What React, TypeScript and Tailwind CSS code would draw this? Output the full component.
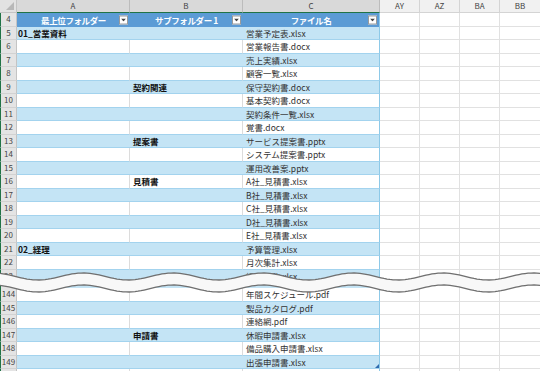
import React from "react";

type R = { n: number; a?: string; b?: string; c?: string; hideNum?: boolean };

const top: R[] = [
  { n: 5, a: "01_営業資料", c: "営業予定表.xlsx" },
  { n: 6, c: "営業報告書.docx" },
  { n: 7, c: "売上実績.xlsx" },
  { n: 8, c: "顧客一覧.xlsx" },
  { n: 9, b: "契約関連", c: "保守契約書.docx" },
  { n: 10, c: "基本契約書.docx" },
  { n: 11, c: "契約条件一覧.xlsx" },
  { n: 12, c: "覚書.docx" },
  { n: 13, b: "提案書", c: "サービス提案書.pptx" },
  { n: 14, c: "システム提案書.pptx" },
  { n: 15, c: "運用改善案.pptx" },
  { n: 16, b: "見積書", c: "A社_見積書.xlsx" },
  { n: 17, c: "B社_見積書.xlsx" },
  { n: 18, c: "C社_見積書.xlsx" },
  { n: 19, c: "D社_見積書.xlsx" },
  { n: 20, c: "E社_見積書.xlsx" },
  { n: 21, a: "02_経理", c: "予算管理.xlsx" },
  { n: 22, c: "月次集計.xlsx" },
];

const bottom: R[] = [
  { n: 144, c: "年間スケジュール.pdf" },
  { n: 145, c: "製品カタログ.pdf" },
  { n: 146, c: "連絡網.pdf" },
  { n: 147, b: "申請書", c: "休暇申請書.xlsx" },
  { n: 148, c: "備品購入申請書.xlsx" },
  { n: 149, c: "出張申請書.xlsx" },
];

function ExtCells() {
  return (
    <>
      <div className="w-[40px] shrink-0 border-r border-b border-[#e1e1e1]" />
      <div className="w-[40px] shrink-0 border-r border-b border-[#e1e1e1]" />
      <div className="w-[40px] shrink-0 border-r border-b border-[#e1e1e1]" />
      <div className="w-[40px] shrink-0 border-b border-[#e1e1e1]" />
    </>
  );
}

function DataRow({ n, a, b, c, hideNum }: R) {
  const blue = n % 2 === 1;
  const cellBase = "shrink-0 border-b border-[#a3d3ee] flex items-center overflow-hidden whitespace-nowrap text-[8.5px] leading-none";
  const fill = blue ? "bg-[#c4e4f5]" : "bg-white";
  return (
    <div className="flex h-[13.5px]">
      <div className="w-[17px] shrink-0 bg-[#e4e4e4] border-l border-l-[#217346] border-r border-r-[#c4c4c4] border-b border-b-[#d2d2d2] flex items-center justify-center text-[8px] leading-none text-[#444]">
        {hideNum ? "" : n}
      </div>
      <div className={`w-[113px] pl-[1px] font-bold text-[#111] ${cellBase} ${fill} ${blue ? "" : "border-r border-r-[#dcdcdc]"}`}>{a}</div>
      <div className={`w-[113px] pl-[3px] font-bold text-[#111] ${cellBase} ${fill} ${blue ? "" : "border-r border-r-[#dcdcdc]"}`}>{b}</div>
      <div className={`w-[137px] pl-[3px] text-[#333] border-r border-r-[#8dc9e8] ${cellBase} ${fill}`}>{c}</div>
      <ExtCells />
    </div>
  );
}

function FilterBtn() {
  return (
    <div className="absolute right-[2px] top-1/2 -translate-y-1/2 w-[9px] h-[9px] bg-white border border-[#9a9a9a] flex items-center justify-center">
      <svg width="5" height="3" viewBox="0 0 5 3">
        <path d="M0 0 L5 0 L2.5 3 Z" fill="#444" />
      </svg>
    </div>
  );
}

function wavePath(cy: number) {
  const pts: string[] = [];
  for (let x = 0; x <= 540; x += 3) {
    const y = cy - 3.5 * Math.cos((2 * Math.PI * (x - 83)) / 90);
    pts.push(`${x} ${y.toFixed(2)}`);
  }
  return pts;
}

function Wave() {
  const t = wavePath(8.5);
  const b = wavePath(20.5);
  const fillD = `M${t.join(" L")} L${[...b].reverse().join(" L")} Z`;
  return (
    <svg className="absolute left-0 top-[268px]" width="540" height="28" viewBox="0 0 540 28">
      <path d={fillD} fill="#f8f8f8" />
      <path d={`M${t.join(" L")}`} fill="none" stroke="#6f6f6f" strokeWidth="1.3" />
      <path d={`M${b.join(" L")}`} fill="none" stroke="#6f6f6f" strokeWidth="1.3" />
    </svg>
  );
}

export default function App() {
  const colHdr = "shrink-0 flex items-center justify-center text-[8px] leading-none text-[#444]";
  return (
    <div className="relative w-[540px] h-[371px] overflow-hidden bg-white font-['Noto_Sans_CJK_JP','Noto_Sans',sans-serif]">
      {/* column headers */}
      <div className="flex h-[13px]">
        <div className="relative w-[17px] shrink-0 bg-[#e2e2e2] border-r border-b border-[#c4c4c4]">
          <svg className="absolute right-[2px] bottom-[2px]" width="8" height="8" viewBox="0 0 8 8">
            <path d="M8 0 L8 8 L0 8 Z" fill="#b8b8b8" />
          </svg>
        </div>
        <div className={`w-[113px] bg-[#d9d9d9] border-r border-r-[#bcbcbc] border-b border-b-[#217346] ${colHdr}`}>A</div>
        <div className={`w-[113px] bg-[#d9d9d9] border-r border-r-[#bcbcbc] border-b border-b-[#217346] ${colHdr}`}>B</div>
        <div className={`w-[137px] bg-[#d9d9d9] border-r border-r-[#bcbcbc] border-b border-b-[#217346] ${colHdr}`}>C</div>
        <div className={`w-[40px] bg-[#f1f1f1] border-r border-b border-[#d4d4d4] ${colHdr}`}>AY</div>
        <div className={`w-[40px] bg-[#f1f1f1] border-r border-b border-[#d4d4d4] ${colHdr}`}>AZ</div>
        <div className={`w-[40px] bg-[#f1f1f1] border-r border-b border-[#d4d4d4] ${colHdr}`}>BA</div>
        <div className={`w-[40px] bg-[#f1f1f1] border-b border-[#d4d4d4] ${colHdr}`}>BB</div>
      </div>

      {/* table header row 4 */}
      <div className="flex h-[13.5px]">
        <div className="w-[17px] shrink-0 bg-[#e4e4e4] border-l border-l-[#217346] border-r border-r-[#c4c4c4] border-b border-b-[#d2d2d2] flex items-center justify-center text-[8px] leading-none text-[#444]">4</div>
        <div className="relative w-[113px] shrink-0 bg-[#5b9bd5] flex items-center justify-center text-white font-bold text-[8.5px] leading-none tracking-[-0.4px] whitespace-nowrap">
          最上位フォルダー
          <FilterBtn />
        </div>
        <div className="relative w-[113px] shrink-0 bg-[#5b9bd5] flex items-center justify-center text-white font-bold text-[8.5px] leading-none tracking-[-0.4px] whitespace-nowrap">
          サブフォルダー 1
          <FilterBtn />
        </div>
        <div className="relative w-[137px] shrink-0 bg-[#5b9bd5] border-r border-r-[#8dc9e8] flex items-center justify-center text-white font-bold text-[8.5px] leading-none tracking-[-0.4px] whitespace-nowrap">
          ファイル名
          <FilterBtn />
        </div>
        <ExtCells />
      </div>

      {top.map((r) => (
        <DataRow key={r.n} {...r} />
      ))}

      {/* break area */}
      <div className="h-[18.5px] overflow-hidden">
        <DataRow n={23} c="経費一覧.xlsx" />
        <DataRow n={143} hideNum />
      </div>

      {bottom.map((r) => (
        <DataRow key={r.n} {...r} />
      ))}
      <DataRow n={150} hideNum />

      {/* resize handle */}
      <svg className="absolute left-[375px] top-[364px]" width="4" height="4" viewBox="0 0 4 4">
        <path d="M4 0 L4 4 L0 4 Z" fill="#2e6bb0" />
      </svg>

      <Wave />
    </div>
  );
}
